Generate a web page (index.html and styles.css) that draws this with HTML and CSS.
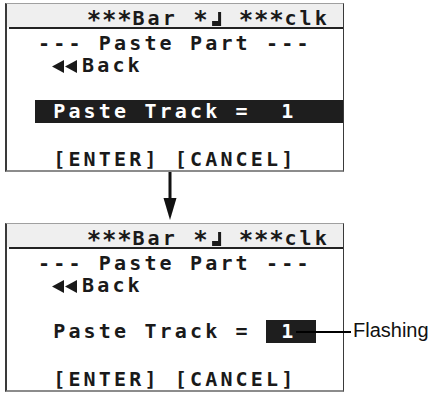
FILE: index.html
```html
<!DOCTYPE html>
<html>
<head>
<meta charset="utf-8">
<link rel="stylesheet" href="styles.css">
</head>
<body>
<div class="page">
  <div class="lcd">
    <div class="hdr"><span class="ast">***</span>Bar <span class="ast">*</span><svg class="note" width="15" height="14" viewBox="0 0 15 14"><rect x="10" y="0" width="3" height="14"/><rect x="4" y="9" width="7" height="5"/></svg> <span class="ast">***</span>clk</div>
    <div class="sep"></div>
    <div class="line title">--- Paste Part ---</div>
    <div class="line back"><svg class="bk" width="30" height="13" viewBox="0 0 30 13"><polygon points="0,6.5 12,0 12,13"/><polygon points="13,6.5 25,0 25,13"/></svg>Back</div>
    <div class="line bar"> Paste Track =  1</div>
    <div class="line keys"> [ENTER] [CANCEL]</div>
  </div>
  <div class="arrow">
    <svg width="14" height="52" viewBox="0 0 14 52"><rect x="5.5" y="0" width="3" height="27"/><polygon points="0.5,26 13.5,26 7,48"/></svg>
  </div>
  <div class="lcd">
    <div class="hdr"><span class="ast">***</span>Bar <span class="ast">*</span><svg class="note" width="15" height="14" viewBox="0 0 15 14"><rect x="10" y="0" width="3" height="14"/><rect x="4" y="9" width="7" height="5"/></svg> <span class="ast">***</span>clk</div>
    <div class="sep"></div>
    <div class="line title">--- Paste Part ---</div>
    <div class="line back"><svg class="bk" width="30" height="13" viewBox="0 0 30 13"><polygon points="0,6.5 12,0 12,13"/><polygon points="13,6.5 25,0 25,13"/></svg>Back</div>
    <div class="line plain"> Paste Track = <span class="flash"> 1 </span></div>
    <div class="line keys"> [ENTER] [CANCEL]</div>
  </div>
  <div class="callout-line"></div>
  <div class="callout-text">Flashing</div>
</div>
</body>
</html>
```
FILE: styles.css
```css
html, body {
  margin: 0;
  padding: 0;
  background: #ffffff;
}
.page {
  position: relative;
  width: 432px;
  height: 394px;
  padding: 3px 0 0 5px;
  box-sizing: border-box;
  overflow: hidden;
}
.lcd {
  width: 339px;
  height: 169px;
  box-sizing: border-box;
  border-left: 2px solid #3a3a3a;
  border-right: 1px solid #3a3a3a;
  border-top: 1px solid #a0a0a0;
  border-bottom: 2px solid #8c8c8c;
  font-family: "DejaVu Sans Mono", monospace;
  font-weight: bold;
  font-size: 20px;
  letter-spacing: 3.16px;
  color: #1a1a1a;
}
.hdr {
  height: 23px;
  box-sizing: border-box;
  padding-top: 3px;
  padding-right: 13px;
  line-height: 22px;
  text-align: right;
  background: #efefef;
  white-space: pre;
}
.ast {
  display: inline-block;
  font-size: 24px;
  letter-spacing: 0.75px;
  line-height: 18px;
  transform: translateY(3px);
}
.note {
  display: inline-block;
  width: 15.2px;
  height: 14px;
  vertical-align: -1px;
  fill: #1a1a1a;
}
.sep {
  height: 2px;
  margin-left: 2px;
  background: #222222;
}
.line {
  height: 22px;
  line-height: 22px;
  white-space: pre;
}
.title {
  margin-top: 3px;
  padding-left: 31px;
}
.back {
  padding-left: 45px;
}
.bk {
  display: inline-block;
  width: 30px;
  height: 13px;
  vertical-align: -1px;
  fill: #1a1a1a;
}
.bar {
  margin-top: 24px;
  margin-left: 28px;
  padding-left: 3px;
  height: 23px;
  line-height: 23px;
  background: #1e1e1e;
  color: #ffffff;
}
.plain {
  margin-top: 24px;
  padding-left: 31px;
  height: 23px;
  line-height: 23px;
}
.flash {
  display: inline-block;
  height: 23px;
  line-height: 23px;
  padding-right: 4px;
  background: #1e1e1e;
  color: #ffffff;
}
.keys {
  margin-top: 25px;
  padding-left: 31px;
  height: 21px;
}
.arrow {
  height: 51px;
  padding-left: 158px;
}
.arrow svg {
  display: block;
  fill: #111111;
}
.callout-line {
  position: absolute;
  left: 296px;
  top: 331px;
  width: 55px;
  height: 2px;
  background: #000000;
}
.callout-text {
  position: absolute;
  left: 353px;
  top: 320px;
  font-family: "Liberation Sans", Arial, sans-serif;
  font-size: 20px;
  line-height: 20px;
  color: #111111;
}
```
